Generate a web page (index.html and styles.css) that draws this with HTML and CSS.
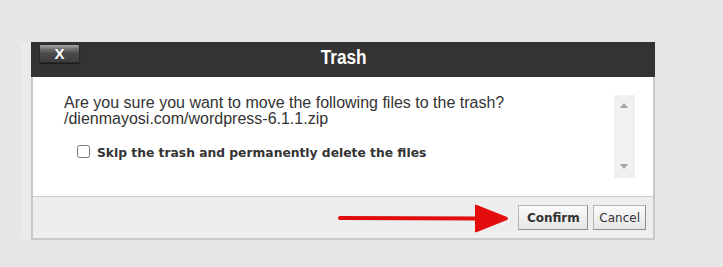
FILE: index.html
```
<!DOCTYPE html>
<html>
<head>
<meta charset="utf-8">
<link rel="stylesheet" href="styles.css">
</head>
<body>
<div class="page">
  <div class="dialog">
    <div class="header">
      <button class="close">X</button>
      <div class="title">Trash</div>
    </div>
    <div class="body">
      <div class="content">
        <p class="msg">Are you sure you want to move the following files to the trash?<br>/dienmayosi.com/wordpress-6.1.1.zip</p>
        <label class="skip"><input type="checkbox"><span>Skip the trash and permanently delete the files</span></label>
      </div>
      <div class="scrollbar">
        <span class="arrow up"></span>
        <span class="arrow down"></span>
      </div>
    </div>
    <div class="footer">
      <button class="btn confirm">Confirm</button>
      <button class="btn">Cancel</button>
      <svg class="redarrow" width="180" height="40" viewBox="0 0 180 40">
        <line x1="9" y1="18" x2="150" y2="18.5" stroke="#e30d0d" stroke-width="4" stroke-linecap="round"/>
        <path d="M144 5 Q143 4 146 5 L176 17 Q178 18.5 176 20 L146 32 Q143 33 144 30 Z" fill="#e30d0d"/>
      </svg>
    </div>
  </div>
</div>
</body>
</html>
```
FILE: styles.css
```
html, body {
  margin: 0;
  padding: 0;
  background: #e6e6e6;
  width: 723px;
  height: 267px;
  overflow: hidden;
}
.page {
  padding: 42px 0 0 31px;
}
.dialog {
  width: 620px;
  border: 2px solid #c9c9c9;
  border-top: none;
  background: #fff;
  box-shadow: -11px 0 0 -1px #ebebeb;
}
.header {
  position: relative;
  height: 35px;
  background: #333333;
  margin: 0 -2px;
  display: flex;
  align-items: center;
  justify-content: center;
}
.close {
  position: absolute;
  left: 8px;
  top: 2px;
  width: 41px;
  height: 19px;
  padding: 0;
  border: 1px solid #2a2a2a;
  border-radius: 2px;
  background: linear-gradient(#a8a8a8 0%, #6e6e6e 25%, #4a4a4a 50%, #3d3d3d 100%);
  color: #fff;
  font: bold 15px "Liberation Sans", Arial, sans-serif;
  line-height: 17px;
  box-shadow: 0 1px 1px rgba(0,0,0,0.5);
}
.title {
  color: #fff;
  font: bold 20px "Liberation Sans", Arial, sans-serif;
  transform: scaleX(0.86);
  margin-left: 2px;
  margin-top: -4px;
}
.body {
  height: 120px;
  display: flex;
  padding: 0 18px 0 31px;
  border-bottom: 1px solid #cfcfcf;
  box-sizing: border-box;
}
.content {
  flex: 1;
  padding-top: 18px;
}
.msg {
  margin: 0;
  font: 16px/16px "Liberation Sans", Arial, sans-serif;
  color: #333;
}
.skip {
  display: flex;
  align-items: center;
  margin: 16px 0 0 13px;
  font: bold 12.3px "DejaVu Sans", Verdana, sans-serif;
  color: #333;
}
.skip span {
  margin-top: 3px;
}
.skip input {
  width: 13px;
  height: 13px;
  margin: 0 7px 0 0;
}
.scrollbar {
  width: 21px;
  height: 83px;
  margin-top: 18px;
  background: #f1f1f1;
  position: relative;
}
.arrow {
  position: absolute;
  left: 6px;
  width: 0;
  height: 0;
  border-left: 4px solid transparent;
  border-right: 4px solid transparent;
}
.arrow.up {
  top: 8px;
  border-bottom: 5px solid #a3a3a3;
}
.arrow.down {
  bottom: 9px;
  border-top: 5px solid #a3a3a3;
}
.footer {
  position: relative;
  height: 41px;
  background: #eeeeee;
  display: flex;
  justify-content: flex-end;
  align-items: flex-start;
  gap: 5px;
  padding: 8px 7px 0 0;
  box-sizing: border-box;
}
.btn {
  height: 25px;
  padding: 0 5px;
  font: 12px "DejaVu Sans", Verdana, sans-serif;
  color: #333;
  background: linear-gradient(#fafafa, #e6e6e6);
  border: 1px solid #b5b5b5;
  border-right-color: #8e8e8e;
  border-bottom-color: #8e8e8e;
  border-radius: 0;
}
.btn.confirm {
  font-weight: bold;
  width: 70px;
}
.redarrow {
  position: absolute;
  left: 298px;
  top: 3px;
}
```
